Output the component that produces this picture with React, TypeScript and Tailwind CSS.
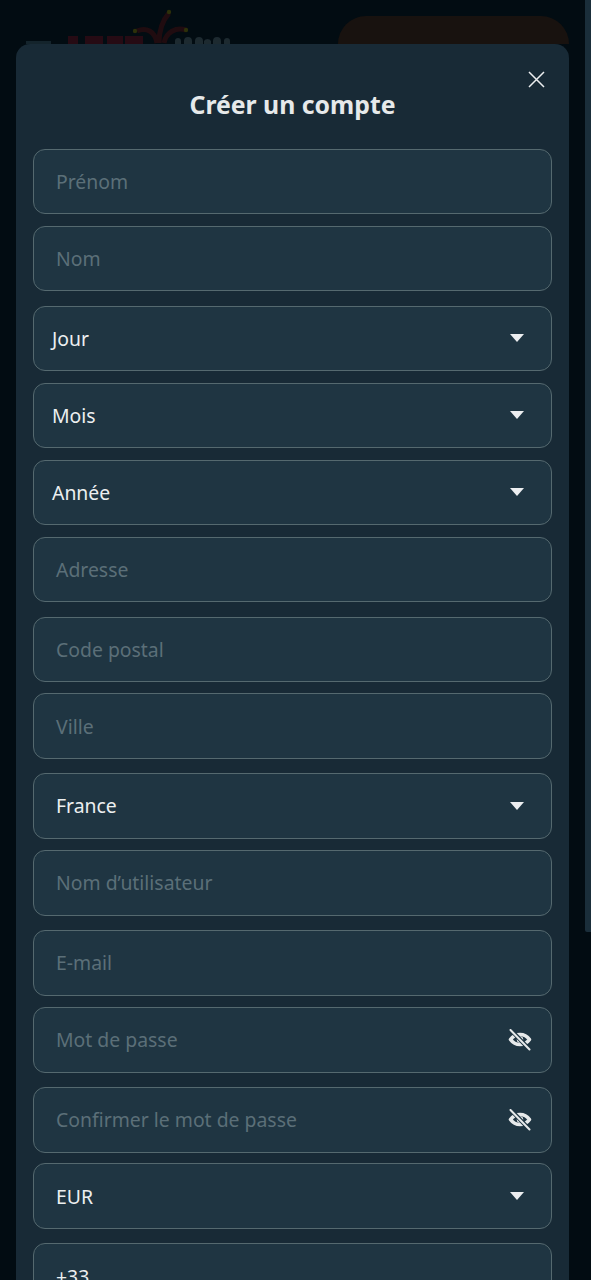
type Field = { label: string; kind?: "select" | "password"; value?: boolean; pad?: string; top: string };

const fields: Field[] = [
  { label: "Prénom", top: "mt-0" },
  { label: "Nom", top: "mt-[11.2px]" },
  { label: "Jour", kind: "select", value: true, pad: "pl-[18px]", top: "mt-[14.2px]" },
  { label: "Mois", kind: "select", value: true, pad: "pl-[18px]", top: "mt-[11.2px]" },
  { label: "Année", kind: "select", value: true, pad: "pl-[18px]", top: "mt-[11.2px]" },
  { label: "Adresse", top: "mt-[11.2px]" },
  { label: "Code postal", top: "mt-[14.2px]" },
  { label: "Ville", top: "mt-[11.2px]" },
  { label: "France", kind: "select", value: true, top: "mt-[13.7px]" },
  { label: "Nom d’utilisateur", top: "mt-[11.2px]" },
  { label: "E-mail", top: "mt-[14.2px]" },
  { label: "Mot de passe", kind: "password", top: "mt-[11.2px]" },
  { label: "Confirmer le mot de passe", kind: "password", top: "mt-[14.2px]" },
  { label: "EUR", kind: "select", value: true, top: "mt-[10.7px]" },
  { label: "+33", value: true, top: "mt-[14.2px]" },
];

const EyeSlash = () => (
  <svg width="24" height="22" viewBox="0 0 24 22" className="-mr-px text-[#e6e9ea]">
    <path d="M2.500 10.500C5 7 8 5.500 12 5.500s7 1.500 9.500 5C19 14 16 15.500 12 15.500S5 14 2.500 10.500z" fill="none" stroke="currentColor" strokeWidth="3.600" strokeLinejoin="round" />
    <circle cx="12" cy="10.500" r="3.200" fill="currentColor" />
    <path d="M3 1 21 20" stroke="#1f3542" strokeWidth="4.200" />
    <path d="M2.500 1 21.500 20.500" stroke="currentColor" strokeWidth="2" strokeLinecap="round" />
  </svg>
);

const Row = ({ f }: { f: Field }) => (
  <div className={`h-[65.8px] shrink-0 rounded-[12px] border border-[#55696f] bg-[#1f3542] flex items-center justify-between ${f.top} ${f.pad ?? "pl-[22px]"} pr-5`}>
    <span className={`text-[19.4px] ${f.value ? "text-[#eceff0]" : "text-[#5b6f78]"}`}>{f.label}</span>
    {f.kind === "select" && (
      <svg width="14" height="8" viewBox="0 0 14 8" className="mr-[7px]">
        <path d="M0 0h14L7 8z" fill="#eceef0" />
      </svg>
    )}
    {f.kind === "password" && <EyeSlash />}
  </div>
);

export default function App() {
  return (
    <div className="relative h-[1280px] w-[591px] overflow-hidden bg-[#020c12] font-['Noto_Sans','Open_Sans',sans-serif]">
      {/* dimmed header behind the modal */}
      <div className="flex h-[44px] items-end justify-between pl-[26px] pr-[22px]">
        <div className="flex items-end gap-[17px]">
          <div className="mb-0 h-[3px] w-[25px] bg-[#14242c]" />
          <svg width="172" height="36" viewBox="68 9 172 36">
            <rect x="68" y="37" width="10" height="8" fill="#260b14" />
            <rect x="85" y="37" width="18" height="8" fill="#260b14" />
            <rect x="107" y="37" width="16" height="8" fill="#260b14" />
            <rect x="125" y="37" width="18" height="8" fill="#260b14" />
            <path d="M137 32c9-4 18 0 20 12M169 14c-6 7-10 18-10 30M186 31c-10-3-20 2-22 13" fill="none" stroke="#200c10" strokeWidth="5" />
            <circle cx="135" cy="32" r="2.200" fill="#2d300a" />
            <circle cx="169" cy="13" r="2.200" fill="#2d300a" />
            <circle cx="186" cy="31" r="2.200" fill="#2d300a" />
            <path d="M175 45v-3a3 3 0 0 1 6 0v3zM184 45v-3a4 4 0 0 1 8 0v3zM195 45v-3a4 4 0 0 1 8 0v3zM204 45v-3a4 4 0 0 1 7 0v3zM213 45v-3a4 4 0 0 1 8 0v3zM224 45v-3a3 3 0 0 1 6 0v3z" fill="#1d2a30" />
          </svg>
        </div>
        <div className="h-[28px] w-[231px] rounded-t-[30px] bg-[#18120f]" />
      </div>

      {/* scrollbar */}
      <div className="absolute right-0 top-0 h-[932px] w-[6px] rounded-bl-[2px] bg-[#1a2e3a]" />

      {/* modal */}
      <div className="ml-4 flex h-[1240px] w-[553px] flex-col overflow-hidden rounded-t-[14px] bg-[#182a36] px-[17px]">
        <div className="relative flex h-[104.600px] shrink-0 items-start justify-center pt-[43px]">
          <h1 className="text-[24.800px] font-bold leading-[34px] text-[#e6e9ea]">Créer un compte</h1>
          <svg width="17" height="17" viewBox="0 0 17 17" className="absolute right-[7.500px] top-[26.500px] text-[#eceef0]">
            <path d="M1 1l15 15M16 1 1 16" stroke="currentColor" strokeWidth="1.500" />
          </svg>
        </div>
        {fields.map((f) => (
          <Row key={f.label} f={f} />
        ))}
      </div>
    </div>
  );
}
